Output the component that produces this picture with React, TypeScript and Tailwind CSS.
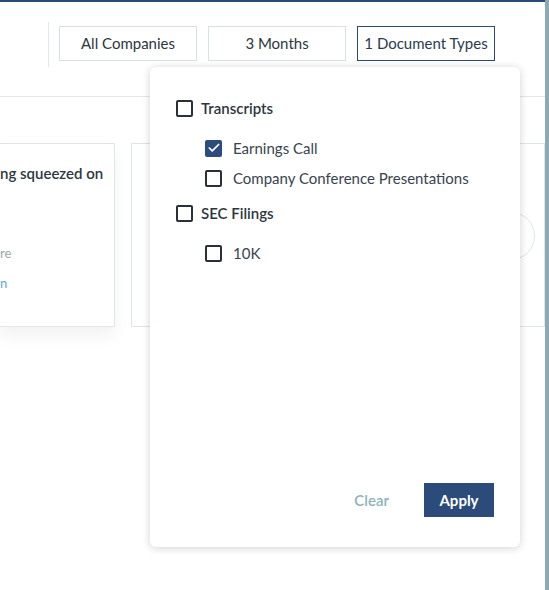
import { Check } from "lucide-react";

type Option = { label: string; checked?: boolean };

const groups: { title: string; options: Option[] }[] = [
  {
    title: "Transcripts",
    options: [
      { label: "Earnings Call", checked: true },
      { label: "Company Conference Presentations" },
    ],
  },
  { title: "SEC Filings", options: [{ label: "10K" }] },
];

function Box({ checked }: { checked?: boolean }) {
  return checked ? (
    <span className="flex h-[17px] w-[17px] shrink-0 items-center justify-center rounded-[2px] bg-[#2b4c7c]">
      <Check className="h-[14px] w-[14px] text-white" strokeWidth={3} />
    </span>
  ) : (
    <span className="h-[17px] w-[17px] shrink-0 rounded-[2px] border-2 border-[#2a2f38] bg-white" />
  );
}

function FilterButton({ label, active }: { label: string; active?: boolean }) {
  return (
    <button
      type="button"
      className={
        active
          ? "flex h-[35px] w-[138px] items-center justify-center border border-[#2b4a78] bg-white text-[15px] text-[#2b3a4e]"
          : "flex h-[35px] w-[138px] items-center justify-center border border-[#d8e0e3] bg-white text-[15px] text-[#2d3640]"
      }
    >
      {label}
    </button>
  );
}

export default function App() {
  return (
    <div className="relative flex h-[590px] w-[549px] overflow-hidden bg-white font-['Lato',sans-serif] text-[#2d3640]">
      <div className="flex flex-1 flex-col border-t-2 border-[#2b4a78]">
        <header className="flex h-[95px] items-start border-b border-[#e2e8ea] pl-[48px] pt-[20px]">
          <div className="h-[45px] w-px bg-[#e2e8ea]" />
          <div className="ml-[10px] mt-[4px] flex gap-[11px]">
            <FilterButton label="All Companies" />
            <FilterButton label="3 Months" />
            <FilterButton label="1 Document Types" active />
          </div>
        </header>

        <div className="relative flex flex-1 gap-[16px] pt-[46px]">
          <div className="-ml-px h-[184px] w-[116px] shrink-0 border border-[#dfe6e8] bg-white pt-[19px] shadow-[0_10px_16px_rgba(0,0,0,0.05)]">
            <div className="whitespace-nowrap text-[15px] font-semibold leading-5">ng squeezed on</div>
            <div className="mt-[60px] text-[13px] leading-5 text-[#9aa6ad]">re</div>
            <div className="mt-[10px] text-[13px] leading-5 text-[#5aa7dc]">n</div>
          </div>
          <div className="h-[184px] flex-1 border border-[#dfe6e8] bg-white" />
          <div className="absolute left-[487px] top-[115px] h-[48px] w-[48px] rounded-full border border-[#dfe6e8] bg-white" />
        </div>
      </div>
      <div className="w-[4px] bg-[#8aabb5]" />

      <div className="absolute left-[150px] top-[67px] flex h-[480px] w-[370px] flex-col rounded-[6px] bg-white px-[26px] pb-[30px] pt-[26px] shadow-[0_1px_8px_rgba(0,0,0,0.18)]">
        <div className="flex flex-col">
          {groups.map((g, gi) => (
            <div key={g.title} className={gi > 0 ? "mt-[5px]" : ""}>
              <label className="flex h-[30px] items-center gap-[8px]">
                <Box />
                <span className="text-[15px] font-semibold text-[#2d3640]">{g.title}</span>
              </label>
              <div className="mt-[10px] flex flex-col pl-[29px]">
                {g.options.map((o) => (
                  <label key={o.label} className="flex h-[30px] items-center gap-[11px]">
                    <Box checked={o.checked} />
                    <span className="text-[15px] text-[#3a4350]">{o.label}</span>
                  </label>
                ))}
              </div>
            </div>
          ))}
        </div>
        <div className="mt-auto flex items-center justify-end gap-[35px]">
          <button type="button" className="text-[15px] font-semibold text-[#8fb1bd]">
            Clear
          </button>
          <button
            type="button"
            className="flex h-[34px] w-[70px] items-center justify-center bg-[#2b4b7a] text-[15px] font-bold text-white"
          >
            Apply
          </button>
        </div>
      </div>
    </div>
  );
}
